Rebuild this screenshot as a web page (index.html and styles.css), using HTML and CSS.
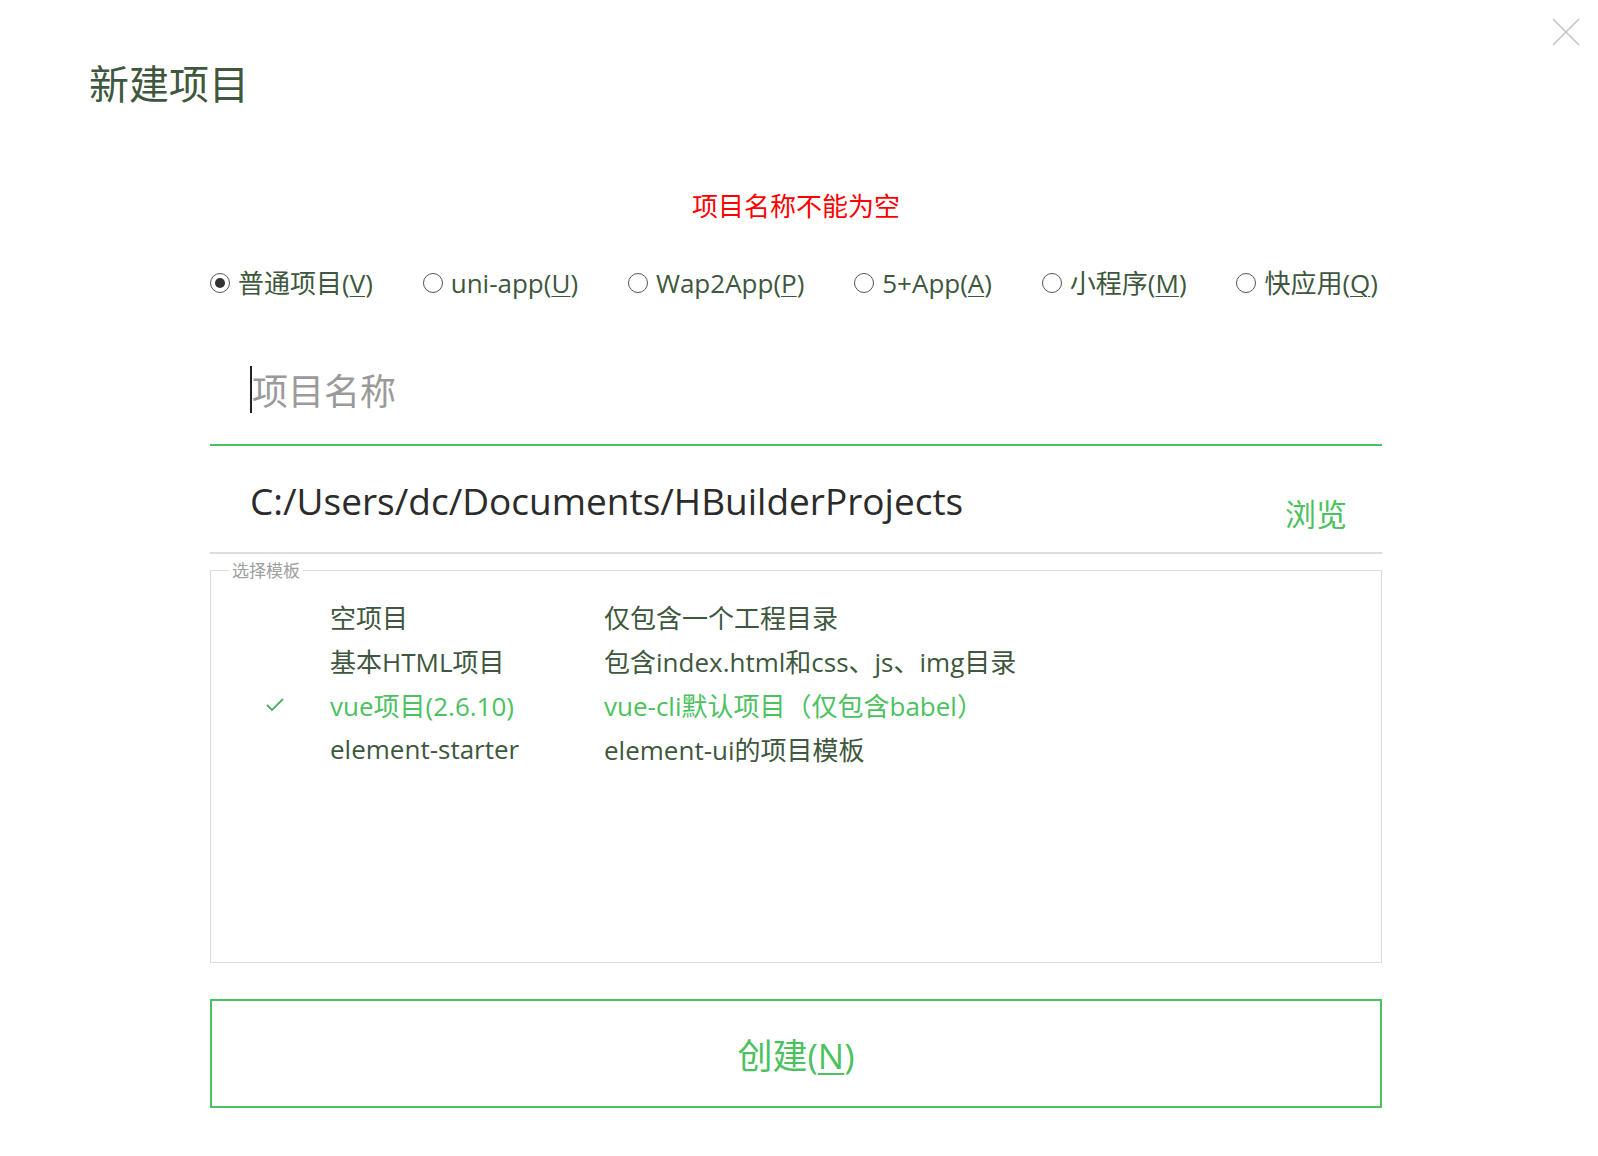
FILE: index.html
```html
<!DOCTYPE html>
<html lang="zh-CN">
<head>
<meta charset="utf-8">
<title>新建项目</title>
<link rel="stylesheet" href="styles.css">
</head>
<body>
<div class="dialog">
  <button class="close" aria-label="关闭">
    <svg width="28" height="28" viewBox="0 0 28 28"><path d="M1 1 L27 27 M27 1 L1 27" stroke="#c4c4c4" stroke-width="1.6" fill="none"/></svg>
  </button>
  <h1 class="title">新建项目</h1>
  <div class="content">
    <p class="error">项目名称不能为空</p>
    <div class="types">
      <label class="type"><span class="radio checked"></span>普通项目(<u>V</u>)</label>
      <label class="type"><span class="radio"></span>uni-app(<u>U</u>)</label>
      <label class="type"><span class="radio"></span>Wap2App(<u>P</u>)</label>
      <label class="type"><span class="radio"></span>5+App(<u>A</u>)</label>
      <label class="type"><span class="radio"></span>小程序(<u>M</u>)</label>
      <label class="type"><span class="radio"></span>快应用(<u>Q</u>)</label>
    </div>
    <div class="name-field"><span class="caret"></span><span class="placeholder">项目名称</span></div>
    <div class="path-field">
      <span class="path">C:/Users/dc/Documents/HBuilderProjects</span>
      <span class="browse">浏览</span>
    </div>
    <fieldset class="templates">
      <legend>选择模板</legend>
      <div class="tpl-list">
        <span class="check"></span><span>空项目</span><span>仅包含一个工程目录</span>
        <span class="check"></span><span>基本HTML项目</span><span>包含index.html和css、js、img目录</span>
        <span class="check on"><svg width="18" height="14" viewBox="0 0 18 14"><path d="M1 7 L6 12 L17 1" stroke="#4caf64" stroke-width="1.8" fill="none"/></svg></span><span class="sel">vue项目(2.6.10)</span><span class="sel">vue-cli默认项目（仅包含babel）</span>
        <span class="check"></span><span>element-starter</span><span>element-ui的项目模板</span>
      </div>
    </fieldset>
    <button class="create">创建(<u>N</u>)</button>
  </div>
</div>
</body>
</html>
```

FILE: styles.css
```css
html, body {
  margin: 0;
  padding: 0;
  background: #ffffff;
}
body {
  font-family: "Segoe UI", "Open Sans", "Noto Sans CJK SC", sans-serif;
  color: #3e573e;
}
.dialog {
  position: relative;
  width: 1598px;
  height: 1156px;
  box-sizing: border-box;
}
.close {
  position: absolute;
  top: 18px;
  right: 18px;
  padding: 0;
  border: 0;
  background: none;
  width: 28px;
  height: 28px;
}
.close svg { display: block; }
.title {
  margin: 0;
  padding: 62px 0 0 89px;
  font-size: 40px;
  line-height: 40px;
  font-weight: normal;
  color: #3e573e;
  font-family: "Noto Sans CJK SC", sans-serif;
}
.content {
  margin-left: 210px;
  width: 1172px;
}
.error {
  margin: 90px 0 0;
  text-align: center;
  color: #ff0000;
  font-size: 26px;
  line-height: 26px;
  font-family: "Noto Sans CJK SC", sans-serif;
}
.types {
  margin-top: 50px;
  display: flex;
  justify-content: space-between;
  height: 30px;
  align-items: center;
  padding-right: 4px;
}
.type {
  display: flex;
  align-items: center;
  font-size: 26px;
  line-height: 30px;
  color: #3e573e;
}
.type u {
  text-underline-offset: 3px;
  text-decoration-thickness: 1px;
}
.radio {
  width: 20px;
  height: 20px;
  box-sizing: border-box;
  border: 1.5px solid #555;
  border-radius: 50%;
  margin-right: 8px;
  display: inline-flex;
  align-items: center;
  justify-content: center;
}
.radio.checked::after {
  content: "";
  width: 10px;
  height: 10px;
  border-radius: 50%;
  background: #333;
}
.name-field {
  margin-top: 46px;
  padding: 27px 0 37px 40px;
  height: 36px;
  border-bottom: 2px solid #4cc160;
  display: flex;
  align-items: center;
}
.caret {
  width: 2px;
  height: 47px;
  background: #222;
}
.placeholder {
  font-size: 36px;
  line-height: 36px;
  color: #9a9a9a;
  font-family: "Noto Sans CJK SC", sans-serif;
}
.path-field {
  height: 106px;
  border-bottom: 2px solid #dddddd;
  display: flex;
  justify-content: space-between;
  align-items: flex-start;
  padding: 0 35px 0 40px;
}
.path {
  margin-top: 33px;
  font-size: 37px;
  line-height: 44px;
  color: #2b2b2b;
}
.browse {
  margin-top: 50px;
  font-size: 31px;
  line-height: 34px;
  color: #4cc160;
  font-family: "Noto Sans CJK SC", sans-serif;
}
.templates {
  margin: 6px 0 0;
  padding: 0;
  border: 1px solid #dcdcdc;
  height: 403px;
  box-sizing: border-box;
  min-width: 0;
}
.templates legend {
  margin-left: 18px;
  padding: 0 3px;
  font-size: 17px;
  line-height: 20px;
  color: #a0a0a0;
  font-family: "Noto Sans CJK SC", sans-serif;
}
.tpl-list {
  margin-top: 15px;
  padding-left: 55px;
  display: grid;
  grid-template-columns: 64px 274px 1fr;
  grid-auto-rows: 44px;
  align-items: center;
  font-size: 26px;
  color: #3e573e;
}
.check {
  display: flex;
  align-items: center;
}
.check svg { display: block; }
.sel { color: #4cc160; }
.create {
  display: block;
  margin-top: 36px;
  width: 1172px;
  height: 109px;
  border: 2px solid #4cc160;
  background: #fff;
  color: #4cc160;
  font-size: 35px;
  font-family: "Segoe UI", "Open Sans", "Noto Sans CJK SC", sans-serif;
  padding: 0;
}
.create u {
  text-underline-offset: 4px;
  text-decoration-thickness: 2px;
}
```
